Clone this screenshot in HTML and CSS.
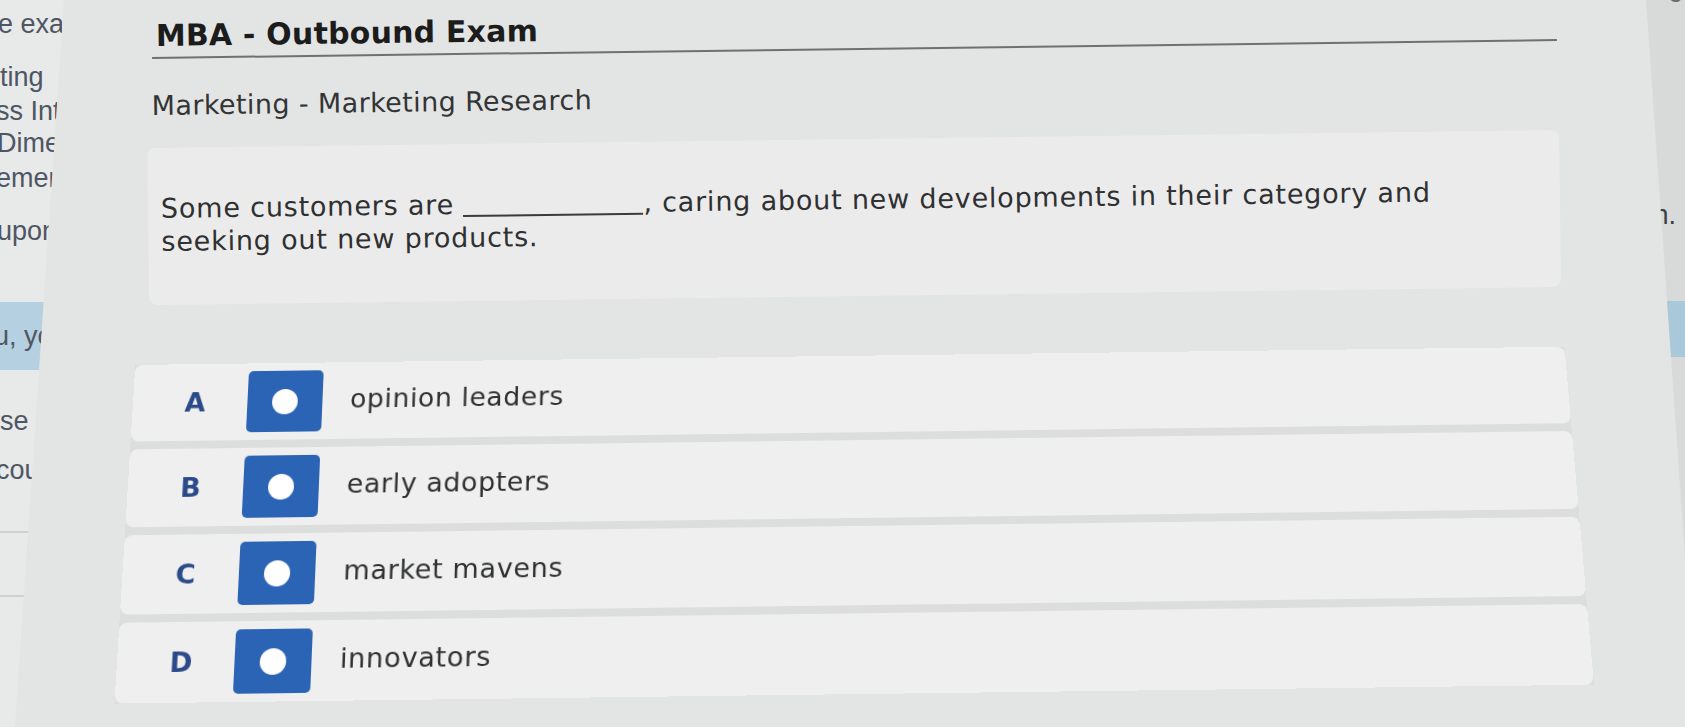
FILE: index.html
```html
<!DOCTYPE html>
<html lang="en">
<head>
<meta charset="utf-8">
<title>MBA - Outbound Exam</title>
<link rel="stylesheet" href="styles.css">
</head>
<body>
  <aside class="side-left">
    <div class="side-item s1">e exa</div>
    <div class="side-item s2">ting</div>
    <div class="side-item s3">ss Int</div>
    <div class="side-item s4">Dime</div>
    <div class="side-item s5">emer</div>
    <div class="side-item s6">upon</div>
    <div class="side-band">u, yo</div>
    <div class="side-item s7">se</div>
    <div class="side-item s8">cou</div>
    <div class="side-rule r1"></div>
    <div class="side-rule r2"></div>
  </aside>

  <main class="page">
    <h1 class="title">MBA - Outbound Exam</h1>
    <div class="title-rule"></div>
    <h2 class="subtitle">Marketing - Marketing Research</h2>

    <section class="question">
      <p class="question-text">Some customers are <span class="blank"></span>, caring about new developments in their category and seeking out new products.</p>
    </section>

    <ul class="options">
      <li class="option">
        <span class="opt-letter">A</span>
        <span class="opt-radio"><span class="dot"></span></span>
        <span class="opt-text">opinion leaders</span>
      </li>
      <li class="option">
        <span class="opt-letter">B</span>
        <span class="opt-radio"><span class="dot"></span></span>
        <span class="opt-text">early adopters</span>
      </li>
      <li class="option">
        <span class="opt-letter">C</span>
        <span class="opt-radio"><span class="dot"></span></span>
        <span class="opt-text">market mavens</span>
      </li>
      <li class="option">
        <span class="opt-letter">D</span>
        <span class="opt-radio"><span class="dot"></span></span>
        <span class="opt-text">innovators</span>
      </li>
    </ul>
  </main>

  <aside class="side-right">
    <div class="right-top">o</div>
    <div class="right-text">n.</div>
    <div class="right-band"></div>
  </aside>
</body>
</html>
```

FILE: styles.css
```css
* {
  box-sizing: border-box;
}

html, body {
  margin: 0;
  padding: 0;
}

body {
  width: 1685px;
  height: 727px;
  overflow: hidden;
  display: flex;
  background: #e3e4e4;
  font-family: "DejaVu Sans", Verdana, sans-serif;
}

/* ---------- left background window ---------- */
.side-left {
  flex: none;
  width: 64px;
  height: 727px;
  background: #e8e9e9;
  display: flex;
  flex-direction: column;
  overflow: hidden;
  clip-path: polygon(0 0, 64px 0, 15px 100%, 0 100%);
  font-family: "Liberation Sans", Arial, sans-serif;
  font-size: 27px;
  color: #4f5663;
}

.side-item {
  line-height: 32px;
  height: 32px;
  white-space: nowrap;
}

.s1 { margin-top: 8px; margin-left: -2px; }
.s2 { margin-top: 21px; }
.s3 { margin-top: 2px; margin-left: -4px; }
.s4 { margin-top: 0; margin-left: -3px; }
.s5 { margin-top: 3px; margin-left: -4px; }
.s6 { margin-top: 21px; margin-left: -3px; }
.s7 { margin-top: 35px; }
.s8 { margin-top: 17px; margin-left: -4px; }

.side-band {
  margin-top: 55px;
  height: 68px;
  line-height: 68px;
  background: #b4d0e1;
  white-space: nowrap;
  margin-left: -6px;
}

.side-rule {
  height: 0;
  border-top: 2px solid #cfd0d1;
}

.r1 { margin-top: 45px; }
.r2 { margin-top: 62px; }

/* ---------- right background window ---------- */
.side-right {
  flex: none;
  width: 39px;
  height: 727px;
  background: #d8d9d9;
  display: flex;
  flex-direction: column;
  overflow: hidden;
  clip-path: polygon(0 0, 100% 0, 100% 557px);
  font-family: "Liberation Sans", Arial, sans-serif;
  font-size: 27px;
  color: #3c3f44;
}

.right-top {
  margin-top: -22px;
  height: 30px;
  line-height: 30px;
  padding-left: 22px;
  color: #6a6d70;
}

.right-text {
  margin-top: 191px;
  height: 32px;
  line-height: 32px;
  text-align: right;
  padding-right: 9px;
  white-space: nowrap;
}

.right-band {
  margin-top: 70px;
  height: 56px;
  background: #a9c8d9;
}

/* ---------- main exam page (photographed slightly tilted) ---------- */
.page {
  flex: 1;
  height: 727px;
  display: flex;
  flex-direction: column;
  color: #2e2f30;
  transform: rotate(-0.73deg);
  transform-origin: 791px 363px;
}

.title {
  margin: 10px 0 0 96px;
  font-size: 30px;
  line-height: 34px;
  font-weight: bold;
  letter-spacing: 0.2px;
  color: #1c1c1d;
}

.title-rule {
  margin: 4px 0 0 92px;
  width: 1405px;
  height: 2px;
  background: #6e7173;
}

.subtitle {
  margin: 31px 0 0 91px;
  font-size: 27px;
  line-height: 32px;
  font-weight: normal;
  letter-spacing: 0.4px;
  color: #333435;
}

.question {
  margin: 26px 0 0 86px;
  width: 1412px;
  height: 157px;
  background: #ebebeb;
  border-radius: 8px;
  padding: 44px 60px 0 13px;
}

.question-text {
  margin: 0;
  font-size: 27px;
  line-height: 33px;
  letter-spacing: 0.8px;
  color: #2f3031;
}

.blank {
  display: inline-block;
  width: 180px;
  height: 1px;
  border-bottom: 2px solid #3a3b3c;
  vertical-align: -3px;
}

.options {
  list-style: none;
  margin: 56px 0 0 59px;
  padding: 0;
  width: 1454px;
  display: flex;
  flex-direction: column;
  gap: 8px;
  background: #dcdddd;
  transform: perspective(1000px) rotateX(5.85deg);
  transform-origin: 50% 50%;
}

.option {
  height: 79px;
  display: flex;
  align-items: center;
  padding-left: 52px;
  background: #efefef;
  border-radius: 8px;
}

.opt-letter {
  width: 22px;
  text-align: center;
  font-size: 27px;
  font-weight: bold;
  color: #2c4a8a;
}

.opt-radio {
  margin-left: 42px;
  width: 76px;
  height: 63px;
  background: #2c64b5;
  border-radius: 5px;
  display: flex;
  align-items: center;
  justify-content: center;
}

.dot {
  width: 26px;
  height: 26px;
  border-radius: 50%;
  background: #ffffff;
}

.opt-text {
  margin-left: 28px;
  margin-bottom: 4px;
  font-size: 27px;
  letter-spacing: 0.6px;
  color: #2f3031;
}
```
